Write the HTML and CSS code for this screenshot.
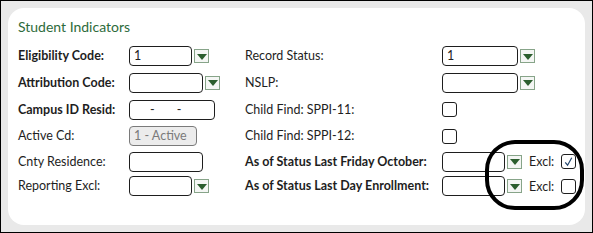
FILE: index.html
```html
<!DOCTYPE html>
<html>
<head>
<meta charset="utf-8">
<link rel="stylesheet" href="styles.css">
</head>
<body>
<div class="frame">
  <div class="card">
    <div class="title">Student Indicators</div>
    <div class="form">
      <div class="lbl b">Eligibility Code:</div>
      <div class="ctl"><div class="inp w62">1</div><span class="dd"></span></div>
      <div class="lbl">Record Status:</div>
      <div class="ctl"><div class="inp w76">1</div><span class="dd"></span></div>

      <div class="lbl b">Attribution Code:</div>
      <div class="ctl"><div class="inp w74"></div><span class="dd"></span></div>
      <div class="lbl">NSLP:</div>
      <div class="ctl"><div class="inp w76"></div><span class="dd"></span></div>

      <div class="lbl b">Campus ID Resid:</div>
      <div class="ctl"><div class="inp w86 cid"><span>-</span><span>-</span></div></div>
      <div class="lbl">Child Find: SPPI-11:</div>
      <div class="ctl"><span class="cb"></span></div>

      <div class="lbl">Active Cd:</div>
      <div class="ctl"><div class="inp w68 dis">1 - Active</div></div>
      <div class="lbl">Child Find: SPPI-12:</div>
      <div class="ctl"><span class="cb"></span></div>

      <div class="lbl">Cnty Residence:</div>
      <div class="ctl"><div class="inp w74"></div></div>
      <div class="lbl b">As of Status Last Friday October:</div>
      <div class="ctl"><div class="inp w62"></div><span class="dd"></span><span class="excl">Excl:</span><span class="cb"><svg viewBox="0 0 14 14" width="14" height="14"><path d="M3.5 7.5 L6 10.5 L10.5 2.5" fill="none" stroke="#24476e" stroke-width="1.3"/></svg></span></div>

      <div class="lbl">Reporting Excl:</div>
      <div class="ctl"><div class="inp w62"></div><span class="dd"></span></div>
      <div class="lbl b">As of Status Last Day Enrollment:</div>
      <div class="ctl"><div class="inp w62"></div><span class="dd"></span><span class="excl">Excl:</span><span class="cb"></span></div>
    </div>
  </div>
  <div class="oval"></div>
</div>
</body>
</html>
```

FILE: styles.css
```css
html, body {
  margin: 0;
  padding: 0;
}
body {
  font-family: Lato, "Open Sans", sans-serif;
  font-size: 12.5px;
  color: #1e1e1e;
}
.frame {
  position: relative;
  box-sizing: border-box;
  width: 593px;
  height: 233px;
  border: 1px solid #000;
  background: #e9e9e9;
  padding: 7px;
}
.card {
  box-sizing: border-box;
  height: 217px;
  background: #fff;
  border-radius: 16px;
  padding: 11px 0 0 10px;
}
.title {
  color: #2e6b3b;
  font-size: 14px;
  line-height: 16px;
  margin-bottom: 8px;
}
.form {
  display: grid;
  grid-template-columns: 111px 116px 197px auto;
  grid-template-rows: 26px 27px 27px 26px 25px 24px;
  align-items: center;
}
.lbl {
  line-height: 16px;
  white-space: nowrap;
}
.b {
  font-weight: bold;
}
.ctl {
  display: flex;
  align-items: center;
}
.inp {
  box-sizing: border-box;
  height: 20px;
  border: 1px solid #1e1e1e;
  border-radius: 4px;
  background: #fff;
  padding: 0 4px;
  line-height: 18px;
  font-size: 12.5px;
}
.w62 { width: 63px; }
.w68 { width: 68px; }
.w74 { width: 74px; }
.w76 { width: 76px; }
.w86 { width: 86px; }
.dis {
  background: #ececec;
  border-color: #7a7a7a;
  color: #7a7a7a;
}
.cid {
  display: flex;
  padding-left: 20px;
  gap: 22px;
}
.dd {
  position: relative;
  box-sizing: border-box;
  width: 15px;
  height: 14px;
  margin-left: 2px;
  border: 1px solid #87a489;
  background: #f4f6f4;
  display: flex;
  align-items: center;
  justify-content: center;
}
.dd::after {
  content: "";
  width: 0;
  height: 0;
  border-left: 5px solid transparent;
  border-right: 5px solid transparent;
  border-top: 6px solid #2b5e2e;
  margin-top: 1px;
}
.cb {
  box-sizing: border-box;
  width: 15px;
  height: 15px;
  border: 1px solid #1e1e1e;
  border-radius: 3px;
  background: #fff;
  display: flex;
  align-items: center;
  justify-content: center;
}
.cb svg {
  display: block;
}
.excl {
  margin-left: 7px;
  margin-right: 7px;
}
.oval {
  position: absolute;
  left: 484px;
  top: 139px;
  width: 99px;
  height: 70px;
  box-sizing: border-box;
  border: 4px solid #000;
  border-radius: 30px;
}
```
